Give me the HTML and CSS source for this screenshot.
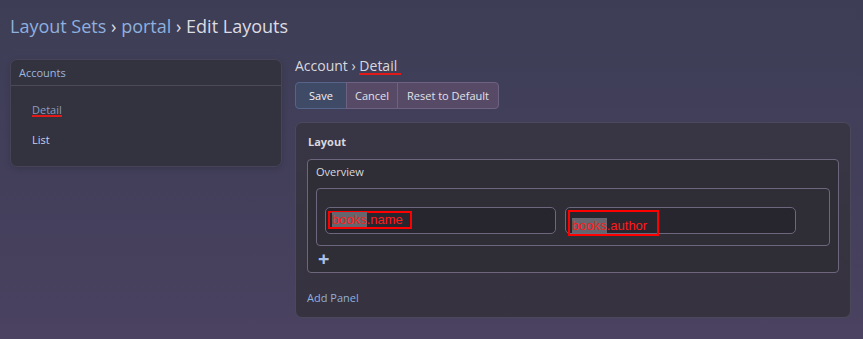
FILE: index.html
```html
<!DOCTYPE html>
<html lang="en">
<head>
    <meta charset="UTF-8">
    <title>Edit Layouts</title>
    <link rel="stylesheet" href="styles.css">
</head>
<body>
    <div class="page">
        <h1 class="title">
            <a class="crumb">Layout Sets</a> <span class="sep">›</span>
            <a class="crumb">portal</a> <span class="sep">›</span>
            <span>Edit Layouts</span>
        </h1>

        <div class="main">
            <div class="side-panel">
                <div class="side-head">Accounts</div>
                <ul class="side-list">
                    <li class="active"><span class="marked">Detail</span></li>
                    <li>List</li>
                </ul>
            </div>

            <div class="content">
                <div class="sub-title">Account <span class="sep">›</span> <span class="marked">Detail</span></div>

                <div class="btn-group">
                    <button class="btn btn-save">Save</button>
                    <button class="btn">Cancel</button>
                    <button class="btn">Reset to Default</button>
                </div>

                <div class="layout-panel">
                    <div class="layout-head">Layout</div>
                    <div class="panel-box">
                        <div class="panel-label">Overview</div>
                        <div class="row-box">
                            <div class="field"><span class="field-name"><span class="blur">books</span>.name</span></div>
                            <div class="field"><span class="field-name tall"><span class="blur">books</span>.author</span></div>
                        </div>
                        <div class="plus">+</div>
                    </div>
                    <a class="add-panel">Add Panel</a>
                </div>
            </div>
        </div>
    </div>
</body>
</html>
```

FILE: styles.css
```css
html, body {
    margin: 0;
    height: 100%;
}

body {
    font-family: 'Open Sans', 'Noto Sans', sans-serif;
    background: linear-gradient(to bottom, #3d3e56 0%, #433f5b 55%, #4a4260 100%);
    color: #d8d8de;
    overflow: hidden;
}

.page {
    padding: 0 12px 0 10px;
}

.title {
    font-size: 18px;
    font-weight: normal;
    margin: 0;
    padding: 14px 0 0 0;
    height: 45px;
    color: #dcdce2;
}

.crumb {
    color: #8fb0de;
}

.main {
    display: flex;
    gap: 13px;
    align-items: flex-start;
}

.side-panel {
    width: 270px;
    height: 106px;
    background: #33323f;
    border: 1px solid #474457;
    border-radius: 7px;
    box-shadow: 0 2px 6px rgba(0,0,0,0.15);
}

.side-head {
    font-size: 11px;
    color: #9eb6dc;
    padding: 5px 8px 5px;
    border-bottom: 1px solid #4d4959;
    height: 15px;
}

.side-list {
    list-style: none;
    margin: 0;
    padding: 10px 0 0 21px;
    font-size: 11px;
    color: #c5d3ee;
}

.side-list li {
    height: 30px;
    line-height: 28px;
}

.side-list li.active {
    color: #8d9cbc;
}

.marked {
    border-bottom: 2px solid #e31818;
    padding-bottom: 0;
    line-height: 1;
    display: inline-block;
}

.content {
    flex: 1;
}

.sub-title {
    font-size: 14px;
    color: #d8d8de;
    height: 24px;
    margin-top: -3px;
    margin-bottom: 2px;
}

.sub-title .marked {
    padding-right: 4px;
}

.btn-group {
    display: flex;
}

.btn {
    font-family: inherit;
    font-size: 11px;
    color: #e2e0ea;
    background: #564a66;
    border: 1px solid #6e6282;
    height: 27px;
    padding: 0 8px;
    margin-left: -1px;
}

.btn:first-child {
    margin-left: 0;
    border-radius: 4px 0 0 4px;
}

.btn:last-child {
    border-radius: 0 4px 4px 0;
    padding: 0 9px;
}

.btn-save {
    background: #3f4b66;
    border-color: #56648a;
    color: #f2f2f6;
    width: 52px;
}

.layout-panel {
    margin-top: 13px;
    width: 556px;
    height: 196px;
    box-sizing: border-box;
    background: linear-gradient(to bottom, #383645, #36323f);
    border: 1px solid #4c485b;
    border-radius: 7px;
    padding: 0 11px;
}

.layout-head {
    font-size: 11px;
    font-weight: bold;
    color: #d8d8de;
    padding: 11px 0 10px 1px;
}

.panel-box {
    background: #2f2e36;
    border: 1px solid #6d667c;
    border-radius: 4px;
    padding: 0 8px;
    height: 114px;
    box-sizing: border-box;
}

.panel-label {
    font-size: 11px;
    color: #d8d8de;
    padding: 4px 0 9px 0;
}

.row-box {
    border: 1px solid #6d667c;
    border-radius: 4px;
    display: flex;
    gap: 9px;
    padding: 18px 33px 11px 8px;
    height: 58px;
    box-sizing: border-box;
}

.field {
    flex: 1;
    height: 27px;
    box-sizing: border-box;
    border: 1px solid #6d667c;
    border-radius: 5px;
    background: #27262f;
    position: relative;
}

.field-name {
    position: absolute;
    left: 2px;
    top: 3px;
    width: 84px;
    height: 18px;
    box-sizing: border-box;
    border: 2px solid #ff0000;
    color: #ff1a1a;
    font-family: 'Liberation Sans', sans-serif;
    font-size: 13px;
    line-height: 14px;
    padding-left: 2px;
}

.field-name.tall {
    top: 2px;
    width: 91px;
    height: 26px;
    line-height: 27px;
}

.blur {
    background: #66646c;
}

.plus {
    font-size: 20px;
    font-weight: bold;
    color: #a9c2ec;
    line-height: 20px;
    padding: 3px 0 0 2px;
}

.add-panel {
    display: block;
    font-size: 11px;
    color: #8fb0de;
    padding-top: 17px;
}
```
